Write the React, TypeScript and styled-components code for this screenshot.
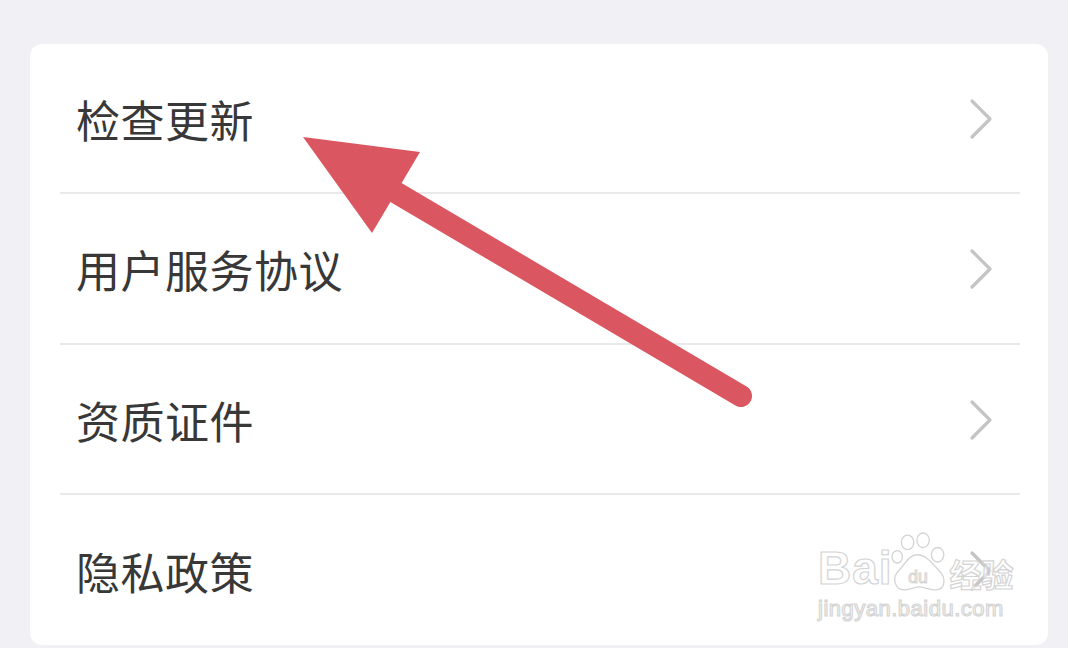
import styled, { createGlobalStyle } from 'styled-components';

const GlobalStyle = createGlobalStyle`
  html, body {
    margin: 0;
    padding: 0;
    background-color: #f0f0f5;
    overflow: hidden;
  }
`;

const Page = styled.div`
  position: relative;
  width: 1068px;
  height: 648px;
  padding: 44px 20px 0 30px;
  box-sizing: border-box;
  font-family: 'Noto Sans CJK SC', 'Noto Sans', sans-serif;
`;

const Card = styled.div`
  background-color: #ffffff;
  border-radius: 12px;
  height: 601px;
  display: flex;
  flex-direction: column;
`;

const Row = styled.div<{ last?: boolean }>`
  display: flex;
  align-items: center;
  justify-content: space-between;
  height: 151.5px;
  box-sizing: border-box;
  margin: 0 28px 0 30px;
  padding: 2px 27px 0 16px;
  border-bottom: ${({ last }) => (last ? 'none' : '2px solid #e9e9e9')};
`;

const Label = styled.span`
  font-size: 44px;
  color: #383838;
  letter-spacing: 0.5px;
  line-height: 1;
`;

const Chevron = styled.svg`
  width: 24px;
  height: 42px;
  flex-shrink: 0;
`;

const Overlay = styled.svg`
  position: absolute;
  left: 0;
  top: 0;
  width: 1068px;
  height: 648px;
  pointer-events: none;
`;

const Watermark = styled.div`
  position: absolute;
  left: 818px;
  top: 530px;
  display: flex;
  flex-direction: column;
  align-items: flex-start;
  font-family: 'Liberation Sans', Arial, sans-serif;
  color: rgba(255, 255, 255, 0.6);
  -webkit-text-stroke: 1.2px #d4d4d4;
`;

const LogoLine = styled.div`
  display: flex;
  align-items: flex-end;
  height: 62px;
`;

const Bai = styled.span`
  font-size: 46px;
  font-weight: 700;
  line-height: 1;
  letter-spacing: 1px;
  margin-bottom: 1px;
`;

const Paw = styled.svg`
  width: 60px;
  height: 60px;
  margin: 0 0 0 -3px;
`;

const Jy = styled.span`
  font-family: 'Noto Sans CJK SC', sans-serif;
  font-size: 32px;
  font-weight: 700;
  line-height: 1;
  margin-bottom: 3px;
`;

const Url = styled.span`
  font-size: 22px;
  line-height: 1;
  margin-top: 6px;
  letter-spacing: 0.5px;
`;

const items = ['检查更新', '用户服务协议', '资质证件', '隐私政策'];

export default function App() {
  return (
    <Page>
      <GlobalStyle />
      <Card>
        {items.map((text, i) => (
          <Row key={text} last={i === items.length - 1}>
            <Label>{text}</Label>
            <Chevron viewBox="0 0 24 42">
              <polyline
                points="3,3 21,21 3,39"
                fill="none"
                stroke="#c4c4c4"
                strokeWidth="3.2"
                strokeLinecap="round"
                strokeLinejoin="round"
              />
            </Chevron>
          </Row>
        ))}
      </Card>

      <Watermark>
        <LogoLine>
          <Bai>Bai</Bai>
          <Paw viewBox="0 0 58 58">
            <g fill="rgba(255,255,255,0.6)" stroke="#d4d4d4" strokeWidth="1.3">
              <ellipse cx="17" cy="10" rx="6" ry="7" />
              <ellipse cx="32" cy="8" rx="6" ry="7" />
              <ellipse cx="7" cy="24" rx="5" ry="6" />
              <ellipse cx="46" cy="22" rx="6" ry="7" />
              <path d="M26 22 C18 22 14 32 8 38 C2 44 4 56 14 56 C20 56 24 53 28 53 C32 53 38 56 44 56 C54 56 54 44 48 38 C42 32 36 22 26 22 Z" />
            </g>
            <text
              x="27"
              y="49"
              textAnchor="middle"
              fontFamily="Liberation Sans, Arial, sans-serif"
              fontSize="17"
              fill="none"
              stroke="#d4d4d4"
              strokeWidth="1"
            >
              du
            </text>
          </Paw>
          <Jy>经验</Jy>
        </LogoLine>
        <Url>jingyan.baidu.com</Url>
      </Watermark>

      <Overlay viewBox="0 0 1068 648">
        <line
          x1="390"
          y1="189"
          x2="741"
          y2="396"
          stroke="#da5660"
          strokeWidth="22"
          strokeLinecap="round"
        />
        <polygon points="303,137 420,152 372,233" fill="#da5660" />
      </Overlay>
    </Page>
  );
}
